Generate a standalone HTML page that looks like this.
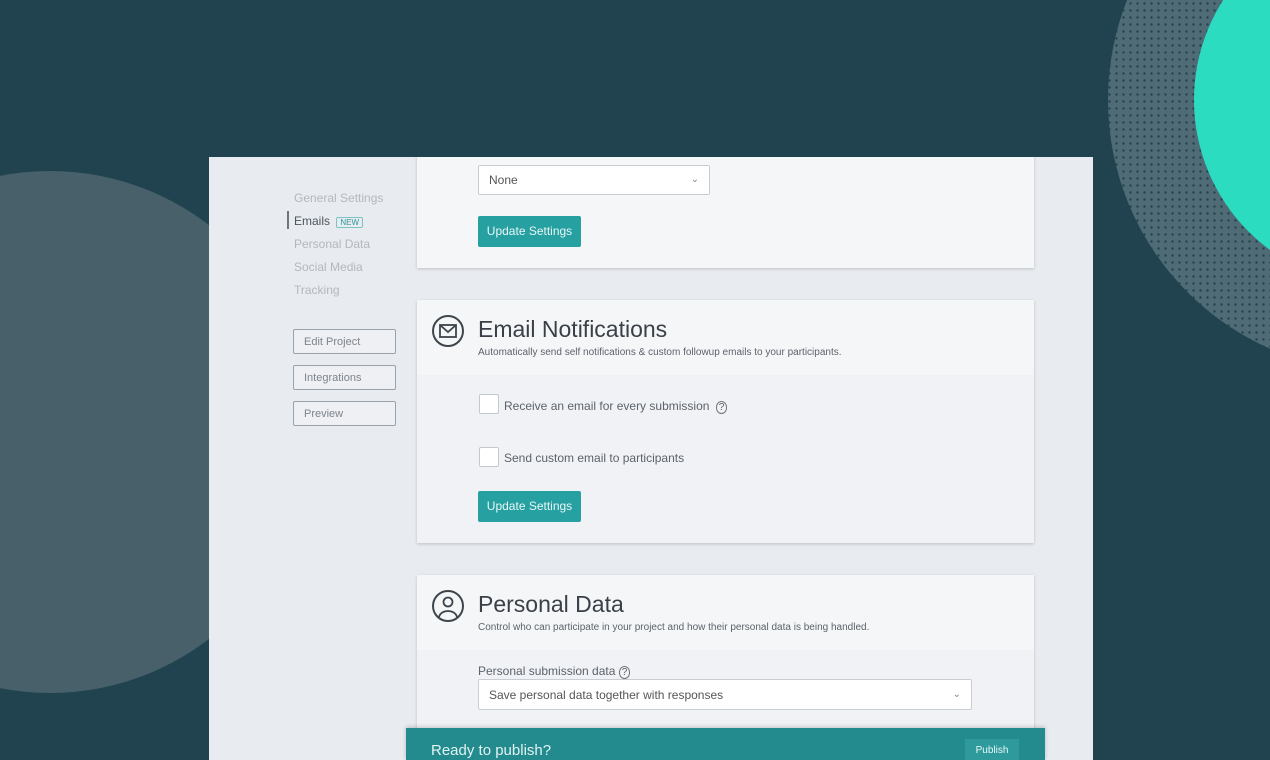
<!DOCTYPE html>
<html><head><style>
*{margin:0;padding:0;box-sizing:border-box}
html,body{width:1270px;height:760px;overflow:hidden}
body{background:#21434f;font-family:"Liberation Sans",sans-serif;position:relative}
.abs{position:absolute}
.panel{left:209px;top:157px;width:884px;height:603px;background:#e8ebef;overflow:hidden}
.card{position:absolute;left:208px;width:617px;background:#f5f6f8;box-shadow:0 1px 3px rgba(0,0,0,.18)}
.nav{position:absolute;left:85px;font-size:12px;color:#b3b8bf}
.sbtn{position:absolute;left:84px;width:103px;height:25px;border:1.5px solid #9aa2ab;border-radius:2px;font-size:11px;color:#7d858e;padding:6px 0 0 10px;background:#eef0f3}
.btn{position:absolute;left:61px;width:103px;height:31px;background:#27a0a2;color:#e8f7f7;font-size:12px;border-radius:2px;text-align:center;line-height:31px}
.sel{position:absolute;background:#fff;border:1px solid #c9ced4;border-radius:2px;font-size:12px;color:#555;padding-left:10px}
.chk{position:absolute;left:62px;width:20px;height:20px;border:1.5px solid #c4c9cf;border-radius:2px;background:#fff}
.lbl{position:absolute;left:87px;font-size:12px;color:#5c636b}
h2{position:absolute;left:61px;font-weight:normal;font-size:23px;color:#3a4047}
.sub{position:absolute;left:61px;font-size:10px;color:#5c636b}
</style></head><body>
<svg class="abs" style="left:0;top:0" width="1270" height="760">
<defs><pattern id="d" width="7" height="7" patternUnits="userSpaceOnUse"><rect width="7" height="7" fill="#4f6b75"/><circle cx="3.5" cy="3.5" r="1.2" fill="#24434f"/></pattern></defs>
<circle cx="50" cy="432" r="261" fill="#47606a"/>
<circle cx="1380" cy="100" r="272" fill="url(#d)"/>
<circle cx="1380" cy="100" r="186" fill="#2bdcc1"/>
</svg>
<div class="abs panel">
 <div class="nav" style="top:34px">General Settings</div>
 <div class="abs" style="left:78px;top:54px;width:2px;height:18px;background:#6d757d"></div>
 <div class="nav" style="top:57px;color:#4e565e">Emails <span style="font-size:8px;color:#2c9a9a;border:1.5px solid #7cc4c4;border-radius:2px;padding:0 3px;margin-left:3px">NEW</span></div>
 <div class="nav" style="top:80px">Personal Data</div>
 <div class="nav" style="top:103px">Social Media</div>
 <div class="nav" style="top:126px">Tracking</div>
 <div class="sbtn" style="top:172px">Edit Project</div>
 <div class="sbtn" style="top:208px">Integrations</div>
 <div class="sbtn" style="top:244px">Preview</div>

 <div class="card" style="top:-2px;height:113px">
  <div class="sel" style="left:61px;top:10px;width:232px;height:30px;line-height:28px">None<span style="position:absolute;right:10px;color:#888;font-size:10px">&#8964;</span></div>
  <div class="btn" style="top:61px">Update Settings</div>
 </div>

 <div class="card" style="top:143px;height:243px">
  <div class="abs" style="left:0;top:75px;width:617px;height:168px;background:#f0f2f5"></div>
  <svg class="abs" style="left:14px;top:14px" width="34" height="34" viewBox="0 0 34 34"><circle cx="17" cy="17" r="15" fill="none" stroke="#3d454c" stroke-width="2"/><rect x="9" y="11" width="16" height="12" fill="none" stroke="#3d454c" stroke-width="1.8"/><path d="M9 11 L17 18 L25 11" fill="none" stroke="#3d454c" stroke-width="1.8"/></svg>
  <h2 style="top:16px">Email Notifications</h2>
  <div class="sub" style="top:47px">Automatically send self notifications &amp; custom followup emails to your participants.</div>
  <div class="chk" style="top:94px"></div>
  <div class="lbl" style="top:99px">Receive an email for every submission <span style="font-size:10px;border:1px solid #777;border-radius:50%;padding:0 2px;margin-left:3px">?</span></div>
  <div class="chk" style="top:147px"></div>
  <div class="lbl" style="top:151px">Send custom email to participants</div>
  <div class="btn" style="top:191px">Update Settings</div>
 </div>

 <div class="card" style="top:418px;height:200px">
  <div class="abs" style="left:0;top:75px;width:617px;height:125px;background:#f0f2f5"></div>
  <svg class="abs" style="left:14px;top:14px" width="34" height="34" viewBox="0 0 34 34"><circle cx="17" cy="17" r="15" fill="none" stroke="#3d454c" stroke-width="2"/><circle cx="17" cy="13" r="4.5" fill="none" stroke="#3d454c" stroke-width="1.8"/><path d="M8 28 C10 20 24 20 26 28" fill="none" stroke="#3d454c" stroke-width="1.8"/></svg>
  <h2 style="top:16px">Personal Data</h2>
  <div class="sub" style="top:47px">Control who can participate in your project and how their personal data is being handled.</div>
  <div class="lbl" style="left:61px;top:89px">Personal submission data <span style="font-size:10px;border:1px solid #777;border-radius:50%;padding:0 2px">?</span></div>
  <div class="sel" style="left:61px;top:104px;width:494px;height:31px;line-height:30px">Save personal data together with responses<span style="position:absolute;right:10px;color:#888;font-size:10px">&#8964;</span></div>
 </div>
</div>
<div class="abs" style="left:406px;top:728px;width:639px;height:32px;background:#238a8d;box-shadow:0 -1px 4px rgba(0,0,0,.2);overflow:hidden">
 <div class="abs" style="left:25px;top:14px;color:#e2f3f3;font-size:15px">Ready to publish?</div>
 <div class="abs" style="left:559px;top:11px;width:54px;height:26px;background:#2e9a9b;color:#e8f7f7;font-size:10px;text-align:center;line-height:24px">Publish</div>
</div>
</body></html>
